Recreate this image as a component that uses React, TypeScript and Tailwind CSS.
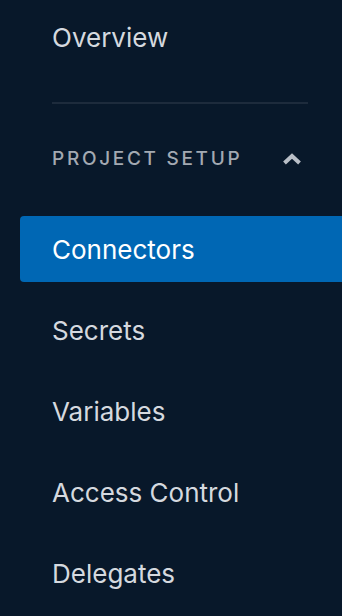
import React from "react";

const items = ["Connectors", "Secrets", "Variables", "Access Control", "Delegates"];

export default function App() {
  return (
    <div
      className="w-[342px] h-[616px] overflow-hidden bg-[#08182a] pl-[20px] flex flex-col"
      style={{ fontFamily: "Inter, 'Noto Sans', sans-serif" }}
    >
      <div className="mt-[4px] h-[66px] flex items-center pl-[32px] text-[26px] text-[#d5d9df]">
        Overview
      </div>
      <div className="mt-[32px] ml-[32px] w-[256px] h-[2px] bg-[#1d2b3c]" />
      <div className="mt-[35px] h-[40px] flex items-center pl-[32px] pr-[40px] justify-between">
        <span className="text-[19px] tracking-[2.7px] text-[#a3a9b2] font-medium">PROJECT SETUP</span>
        <svg width="20" height="12" viewBox="0 0 20 12">
          <path d="M2.5 10 L10 3 L17.5 10" fill="none" stroke="#b9bfc7" strokeWidth="4" strokeLinejoin="miter" />
        </svg>
      </div>
      <div className="mt-[37px] flex flex-col gap-[15px]">
        {items.map((t, i) => (
          <div
            key={t}
            className={
              i === 0
                ? "h-[66px] flex items-center pl-[32px] text-[26px] bg-[#0067b4] text-white rounded-l-[4px]"
                : "h-[66px] flex items-center pl-[32px] text-[26px] text-[#d5d9df]"
            }
          >
            {t}
          </div>
        ))}
      </div>
    </div>
  );
}
